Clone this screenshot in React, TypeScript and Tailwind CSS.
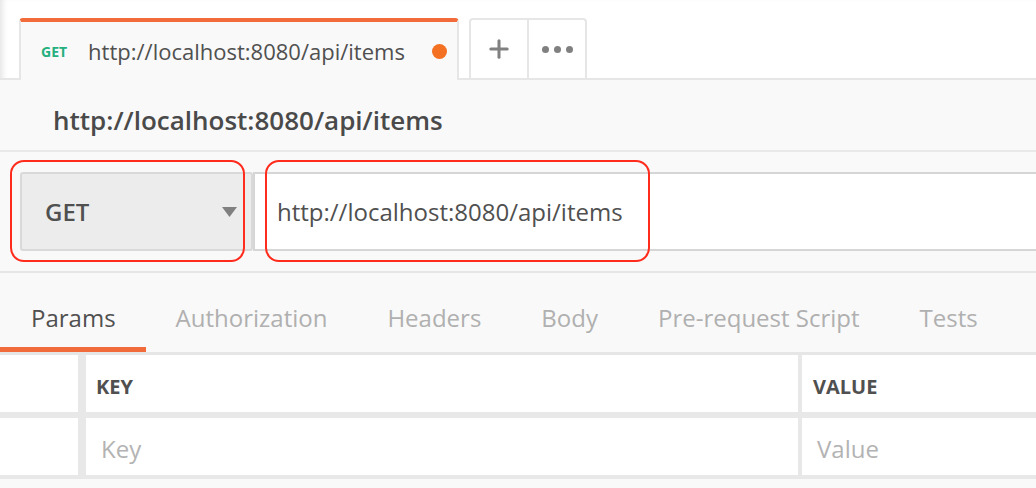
import { Plus } from "lucide-react";

const tabs = ["Authorization", "Headers", "Body", "Pre-request Script", "Tests"];

export default function App() {
  return (
    <div className="relative h-[488px] w-[1036px] overflow-hidden bg-white font-['Open_Sans',sans-serif] text-[#505050] shadow-[inset_6px_0_6px_-4px_rgba(0,0,0,0.12)]">
      {/* request tabs */}
      <div className="flex h-[80px] items-end border-b-2 border-[#e6e6e6] pl-[19px]">
        <div className="relative -mb-[2px] flex h-[62px] w-[440px] items-center rounded-t-[4px] border-x-2 border-t-[4px] border-x-[#e6e6e6] border-t-[#f26b3a] bg-[#f9f9f9] pl-[20px]">
          <span className="text-[14px] font-bold text-[#25b07e]">GET</span>
          <span className="ml-[21px] text-[22px]">http://localhost:8080/api/items</span>
          <span className="ml-auto mr-[10px] h-[15px] w-[15px] rounded-full bg-[#f47023]" />
        </div>
        <div className="ml-[10px] flex h-[60px] rounded-t-[4px] border-x-2 border-t-2 border-[#e6e6e6] bg-white">
          <div className="flex w-[58px] items-center justify-center border-r-2 border-[#e6e6e6]">
            <Plus size={28} strokeWidth={2.6} color="#808080" />
          </div>
          <div className="flex w-[56px] items-center justify-center gap-[5px]">
            <span className="h-[7px] w-[7px] rounded-full bg-[#808080]" />
            <span className="h-[7px] w-[7px] rounded-full bg-[#808080]" />
            <span className="h-[7px] w-[7px] rounded-full bg-[#808080]" />
          </div>
        </div>
      </div>

      {/* title */}
      <div className="flex h-[72px] items-center border-b-2 border-[#e9e9e9] bg-[#f9f9f9] pl-[53px] pt-[10px]">
        <h1 className="text-[26px] font-semibold text-[#4a4a4a]">http://localhost:8080/api/items</h1>
      </div>

      {/* url bar */}
      <div className="flex border-b-2 border-[#e6e6e6] bg-[#f9f9f9] pb-[20px] pl-[20px] pt-[20px]">
        <div className="flex h-[79px] w-[233px] items-center rounded-[3px] border-2 border-[#d9d9d9] bg-[#ececec] pl-[23px] pr-[14px]">
          <span className="text-[24px] font-semibold">GET</span>
          <svg className="ml-auto" width="15" height="10" viewBox="0 0 15 10">
            <path d="M0 0h15L7.5 10z" fill="#808080" />
          </svg>
        </div>
        <div className="flex h-[79px] flex-1 items-center border-y-2 border-l-2 border-[#d6d6d6] bg-white pl-[22px]">
          <span className="text-[24px]">http://localhost:8080/api/items</span>
        </div>
      </div>

      {/* section tabs */}
      <div className="flex h-[82px] border-b-[3px] border-[#e6e6e6] bg-[#f9f9f9]">
        <div className="flex flex-col">
          <div className="flex flex-1 items-center pl-[31px] pr-[30px] pt-[16px] text-[24px]">Params</div>
          <div className="h-[5px] bg-[#f26b3a]" />
        </div>
        {tabs.map((t) => (
          <div key={t} className="flex items-center px-[30px] pb-[5px] pt-[16px] text-[24px] text-[#b0b0b0]">
            {t}
          </div>
        ))}
      </div>

      {/* params table */}
      <div className="bg-[#e8e8e8]">
        <div className="flex h-[57px]">
          <div className="w-[78px] bg-white" />
          <div className="ml-[8px] flex w-[712px] items-center bg-white pl-[10px] pt-[6px] text-[20px] font-bold">KEY</div>
          <div className="ml-[4px] flex flex-1 items-center bg-white pl-[11px] pt-[6px] text-[20px] font-bold">VALUE</div>
        </div>
        <div className="mt-[6px] flex h-[57px]">
          <div className="w-[78px] bg-white" />
          <div className="ml-[8px] flex w-[712px] items-center bg-white pl-[15px] pt-[4px] text-[24px] text-[#b3b3b3]">Key</div>
          <div className="ml-[4px] flex flex-1 items-center bg-white pl-[15px] pt-[4px] text-[24px] text-[#b3b3b3]">Value</div>
        </div>
        <div className="mt-[4px] h-[20px] bg-[#f9f9f9]" />
      </div>

      {/* annotation outlines */}
      <div className="pointer-events-none absolute left-[10px] top-[160px] h-[102px] w-[235px] rounded-[14px] border-2 border-[#ff2b1c]" />
      <div className="pointer-events-none absolute left-[265px] top-[160px] h-[102px] w-[385px] rounded-[14px] border-2 border-[#ff2b1c]" />
    </div>
  );
}
